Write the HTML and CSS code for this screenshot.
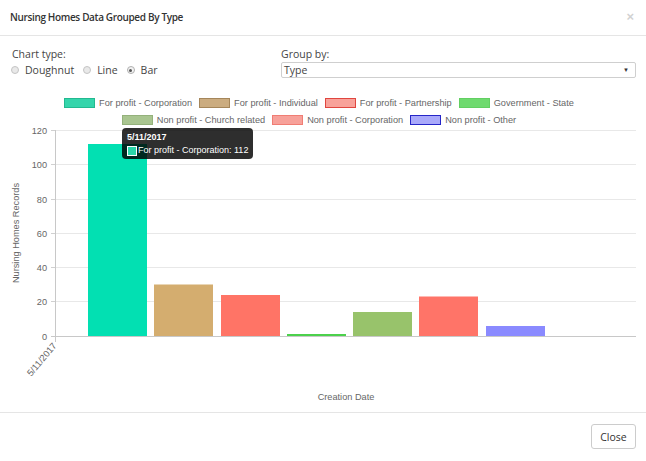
FILE: index.html
```html
<!DOCTYPE html>
<html>
<head>
<meta charset="utf-8">
<link rel="stylesheet" href="styles.css">
</head>
<body>
<div class="modal">
  <header class="modal-header">
    <h4 class="modal-title">Nursing Homes Data Grouped By Type</h4>
    <span class="close">×</span>
  </header>
  <div class="modal-body">
    <div class="controls">
      <div class="ctrl chart-type">
        <div class="ctrl-label">Chart type:</div>
        <div class="radios">
          <label class="radio"><span class="dot"></span>Doughnut</label>
          <label class="radio"><span class="dot"></span>Line</label>
          <label class="radio"><span class="dot checked"></span>Bar</label>
        </div>
      </div>
      <div class="ctrl group-by">
        <div class="ctrl-label">Group by:</div>
        <div class="select"><span>Type</span><span class="caret">▼</span></div>
      </div>
    </div>
    <div class="legend">
      <div class="legend-row">
        <span class="item"><i class="box c1"></i>For profit - Corporation</span>
        <span class="item"><i class="box c2"></i>For profit - Individual</span>
        <span class="item"><i class="box c3"></i>For profit - Partnership</span>
        <span class="item"><i class="box c4"></i>Government - State</span>
      </div>
      <div class="legend-row">
        <span class="item"><i class="box c5"></i>Non profit - Church related</span>
        <span class="item"><i class="box c6"></i>Non profit - Corporation</span>
        <span class="item"><i class="box c7"></i>Non profit - Other</span>
      </div>
    </div>
    <div class="plot">
      <svg class="chart" width="646" height="284" viewBox="0 128 646 284">
        <g class="grid">
          <line x1="56" y1="130.5" x2="636" y2="130.5"/>
          <line x1="56" y1="164.5" x2="636" y2="164.5"/>
          <line x1="56" y1="199.5" x2="636" y2="199.5"/>
          <line x1="56" y1="233.5" x2="636" y2="233.5"/>
          <line x1="56" y1="267.5" x2="636" y2="267.5"/>
          <line x1="56" y1="301.5" x2="636" y2="301.5"/>
        </g>
        <g class="ticks">
          <line x1="51" y1="130.5" x2="56" y2="130.5"/>
          <line x1="51" y1="164.5" x2="56" y2="164.5"/>
          <line x1="51" y1="199.5" x2="56" y2="199.5"/>
          <line x1="51" y1="233.5" x2="56" y2="233.5"/>
          <line x1="51" y1="267.5" x2="56" y2="267.5"/>
          <line x1="51" y1="301.5" x2="56" y2="301.5"/>
        </g>
        <g class="ylabels">
          <text x="47" y="133.5">120</text>
          <text x="47" y="167.5">100</text>
          <text x="47" y="202.5">80</text>
          <text x="47" y="236.5">60</text>
          <text x="47" y="270.5">40</text>
          <text x="47" y="304.5">20</text>
          <text x="47" y="339.5">0</text>
        </g>
        <text class="ytitle" transform="translate(19 233) rotate(-90)">Nursing Homes Records</text>
        <rect x="88" y="144" width="59" height="192" fill="#02e0b2"/>
        <rect x="154" y="284.5" width="59" height="51.5" fill="#d4ad6f"/>
        <rect x="221" y="295" width="59" height="41" fill="#ff7466"/>
        <rect x="287" y="334" width="59" height="2" fill="#4cd14c"/>
        <rect x="353" y="312" width="59" height="24" fill="#98c36b"/>
        <rect x="419" y="296.5" width="59" height="39.5" fill="#ff7468"/>
        <rect x="486" y="326" width="59" height="10" fill="#8a8aff"/>
        <g class="axis">
          <line x1="55.5" y1="130" x2="55.5" y2="342"/>
          <line x1="51" y1="336.5" x2="636" y2="336.5"/>
        </g>
        <text class="xlabel" transform="translate(57 346) rotate(-50)">5/11/2017</text>
        <text class="xtitle" x="346" y="400">Creation Date</text>
      </svg>
      <div class="tooltip">
        <div class="tt-title">5/11/2017</div>
        <div class="tt-line"><i class="tt-box"></i>For profit - Corporation: 112</div>
      </div>
    </div>
  </div>
  <footer class="modal-footer">
    <button class="btn">Close</button>
  </footer>
</div>
</body>
</html>
```

FILE: styles.css
```css
* { box-sizing: border-box; }
html, body { margin: 0; padding: 0; background: #fff; }
body {
  font-family: "Open Sans", "Liberation Sans", sans-serif;
  font-size: 10.5px;
  color: #333;
  width: 646px;
  height: 461px;
  overflow: hidden;
}
.modal { display: flex; flex-direction: column; height: 461px; }

.modal-header {
  height: 36px;
  border-bottom: 1px solid #e5e5e5;
  display: flex;
  align-items: center;
  justify-content: space-between;
  padding: 0 12px 2px 10px;
}
.modal-title {
  margin: 0;
  font-size: 10px;
  font-weight: 600;
  letter-spacing: -0.35px;
  color: #333;
}
.close {
  font-family: "Liberation Sans", sans-serif;
  font-size: 13px;
  font-weight: 700;
  color: #d2d2d2;
  line-height: 1;
}

.modal-body { flex: 1; display: flex; flex-direction: column; }

.controls {
  display: flex;
  padding: 11px 10px 0 11px;
}
.ctrl-label { line-height: 15px; height: 15px; color: #444; }
.chart-type { width: 270px; }
.chart-type .ctrl-label { padding-left: 1px; }
.radios { display: flex; align-items: center; height: 16px; gap: 9px; }
.radio { display: flex; align-items: center; gap: 6px; color: #444; }
.dot {
  width: 8px; height: 8px;
  border-radius: 50%;
  border: 1px solid #c4c4c4;
  background: #e9e9e9;
  position: relative;
}
.dot.checked { background: #f2f2f2; border-color: #b0b0b0; }
.dot.checked::after {
  content: "";
  position: absolute;
  left: 1.5px; top: 1.5px;
  width: 3px; height: 3px;
  border-radius: 50%;
  background: #555;
}
.group-by { flex: 1; }
.select {
  height: 16px;
  border: 1px solid #cfcfcf;
  border-radius: 2px;
  display: flex;
  align-items: center;
  justify-content: space-between;
  padding: 0 6px 0 2px;
  color: #444;
}
.caret { font-size: 6px; color: #333; }

.legend {
  margin-top: 16px;
  padding-right: 8px;
  font-family: "Liberation Sans", Arial, sans-serif;
  font-size: 9.2px;
  color: #666;
}
.legend-row {
  display: flex;
  justify-content: center;
  align-items: center;
  height: 17px;
  gap: 7px;
}
.item { display: flex; align-items: center; gap: 4px; white-space: nowrap; }
.box { display: block; width: 31px; height: 10px; border: 1px solid; }
.c1 { background: #34d5ab; border-color: #22b990; }
.c2 { background: #cbac80; border-color: #a5865a; }
.c3 { background: #f8a29a; border-color: #e0463f; }
.c4 { background: #6fda6f; border-color: #62cf62; }
.c5 { background: #a9c590; border-color: #94b17b; }
.c6 { background: #f7a19a; border-color: #f07d74; }
.c7 { background: #a9a9fa; border-color: #2525c8; }

.plot { position: relative; height: 284px; }
.chart { display: block; overflow: visible; }
.chart text {
  font-family: "Liberation Sans", Arial, sans-serif;
  font-size: 9.2px;
  fill: #666;
}
.grid line { stroke: #e8e8e8; stroke-width: 1; }
.ticks line { stroke: #d0d0d0; stroke-width: 1; }
.axis line { stroke: #c8c8c8; stroke-width: 1; }
.ylabels text { text-anchor: end; }
.chart .ytitle { text-anchor: middle; }
.chart .xlabel { text-anchor: end; }
.chart .xtitle { text-anchor: middle; }

.tooltip {
  position: absolute;
  left: 122px;
  top: 0;
  width: 131px;
  height: 31px;
  background: rgba(0,0,0,0.82);
  border-radius: 4px;
  color: #fff;
  font-family: "Liberation Sans", Arial, sans-serif;
  font-size: 9px;
  padding: 4px 3px 0 5px;
  white-space: nowrap;
}
.tt-title { font-weight: 700; line-height: 11px; height: 13px; }
.tt-line { display: flex; align-items: center; gap: 1px; line-height: 11px; }
.tt-box {
  display: block;
  flex: none;
  width: 10px; height: 10px;
  background: #2bd6aa;
  border: 1px solid #fff;
}

.modal-footer {
  height: 49px;
  border-top: 1px solid #e5e5e5;
  display: flex;
  justify-content: flex-end;
  align-items: flex-start;
  padding: 11px 10px 0 0;
}
.btn {
  font-family: "Open Sans", "Liberation Sans", sans-serif;
  font-size: 10.5px;
  color: #333;
  background: #fff;
  border: 1px solid #ccc;
  border-radius: 3px;
  height: 25px;
  width: 45px;
  padding: 0;
}
```
